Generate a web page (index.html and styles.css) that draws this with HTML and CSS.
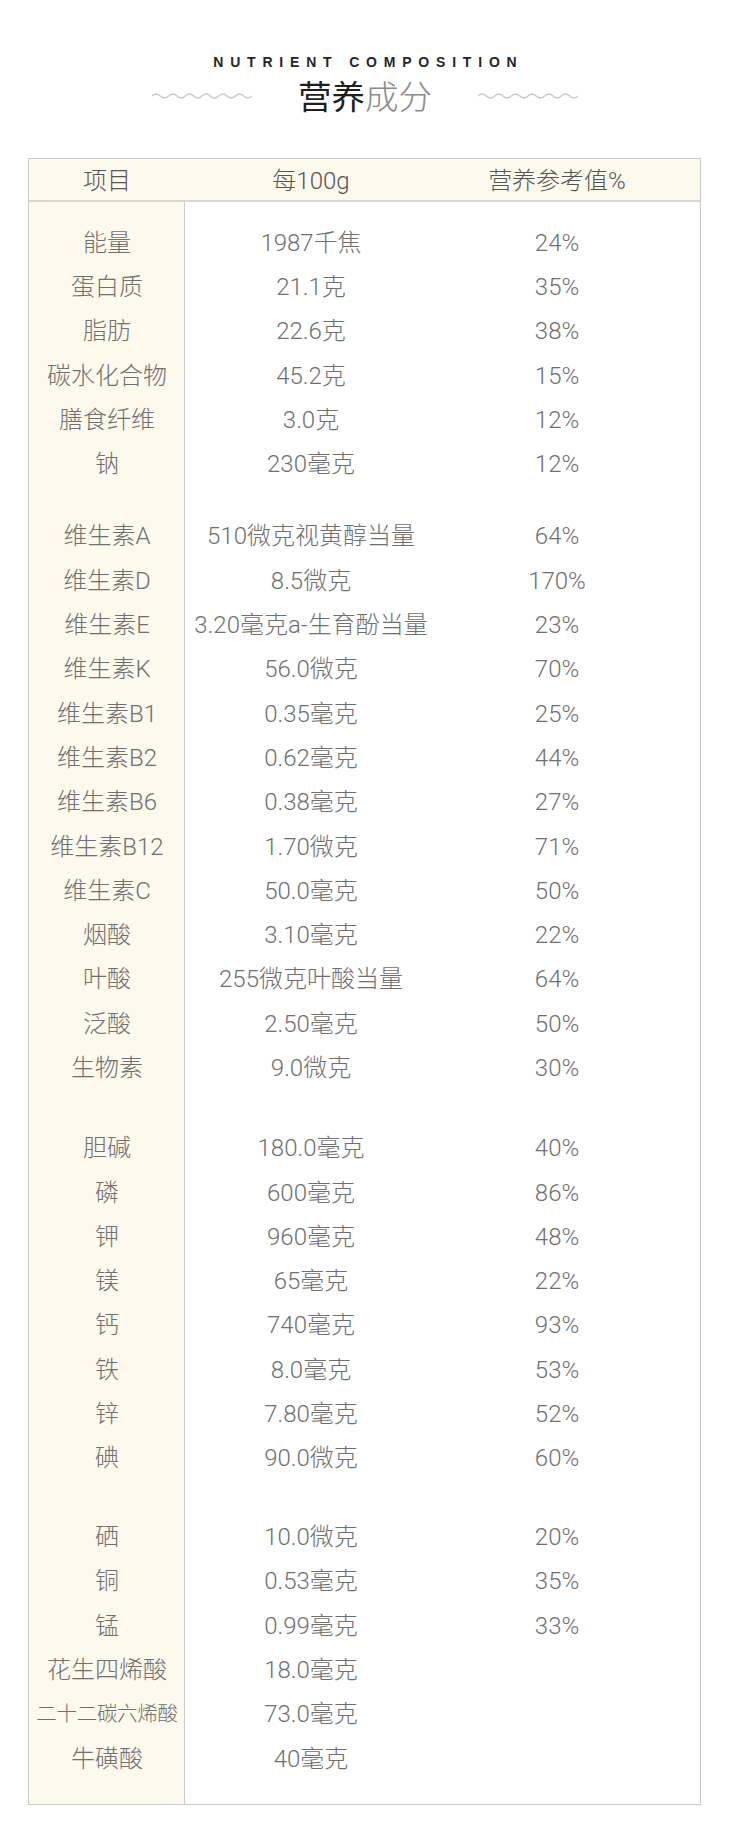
FILE: index.html
```html
<!DOCTYPE html>
<html lang="zh-CN">
<head>
<meta charset="utf-8">
<title>营养成分</title>
<link rel="stylesheet" href="styles.css">
</head>
<body>
<div class="page">
  <header class="heading">
    <div class="en">NUTRIENT COMPOSITION</div>
    <div class="cn-row">
      <svg class="wave" width="100" height="10" viewBox="0 0 100 10"><path d="M0 6 Q4.17 2 8.33 6 T16.67 6 T25 6 T33.33 6 T41.67 6 T50 6 T58.33 6 T66.67 6 T75 6 T83.33 6 T91.67 6 T100 6"/></svg>
      <h1 class="cn"><span class="cn-dark">营养</span><span class="cn-light">成分</span></h1>
      <svg class="wave" width="100" height="10" viewBox="0 0 100 10"><path d="M0 6 Q4.17 2 8.33 6 T16.67 6 T25 6 T33.33 6 T41.67 6 T50 6 T58.33 6 T66.67 6 T75 6 T83.33 6 T91.67 6 T100 6"/></svg>
    </div>
  </header>

  <div class="table">
    <div class="row thead">
      <div class="cell">项目</div>
      <div class="cell">每100g</div>
      <div class="cell">营养参考值%</div>
    </div>
    <div class="tbody">
      <div class="group g1">
        <div class="row"><div class="cell">能量</div><div class="cell">1987千焦</div><div class="cell">24%</div></div>
        <div class="row"><div class="cell">蛋白质</div><div class="cell">21.1克</div><div class="cell">35%</div></div>
        <div class="row"><div class="cell">脂肪</div><div class="cell">22.6克</div><div class="cell">38%</div></div>
        <div class="row"><div class="cell">碳水化合物</div><div class="cell">45.2克</div><div class="cell">15%</div></div>
        <div class="row"><div class="cell">膳食纤维</div><div class="cell">3.0克</div><div class="cell">12%</div></div>
        <div class="row"><div class="cell">钠</div><div class="cell">230毫克</div><div class="cell">12%</div></div>
      </div>
      <div class="group g2">
        <div class="row"><div class="cell">维生素A</div><div class="cell">510微克视黄醇当量</div><div class="cell">64%</div></div>
        <div class="row"><div class="cell">维生素D</div><div class="cell">8.5微克</div><div class="cell">170%</div></div>
        <div class="row"><div class="cell">维生素E</div><div class="cell">3.20毫克a-生育酚当量</div><div class="cell">23%</div></div>
        <div class="row"><div class="cell">维生素K</div><div class="cell">56.0微克</div><div class="cell">70%</div></div>
        <div class="row"><div class="cell">维生素B1</div><div class="cell">0.35毫克</div><div class="cell">25%</div></div>
        <div class="row"><div class="cell">维生素B2</div><div class="cell">0.62毫克</div><div class="cell">44%</div></div>
        <div class="row"><div class="cell">维生素B6</div><div class="cell">0.38毫克</div><div class="cell">27%</div></div>
        <div class="row"><div class="cell">维生素B12</div><div class="cell">1.70微克</div><div class="cell">71%</div></div>
        <div class="row"><div class="cell">维生素C</div><div class="cell">50.0毫克</div><div class="cell">50%</div></div>
        <div class="row"><div class="cell">烟酸</div><div class="cell">3.10毫克</div><div class="cell">22%</div></div>
        <div class="row"><div class="cell">叶酸</div><div class="cell">255微克叶酸当量</div><div class="cell">64%</div></div>
        <div class="row"><div class="cell">泛酸</div><div class="cell">2.50毫克</div><div class="cell">50%</div></div>
        <div class="row"><div class="cell">生物素</div><div class="cell">9.0微克</div><div class="cell">30%</div></div>
      </div>
      <div class="group g3">
        <div class="row"><div class="cell">胆碱</div><div class="cell">180.0毫克</div><div class="cell">40%</div></div>
        <div class="row"><div class="cell">磷</div><div class="cell">600毫克</div><div class="cell">86%</div></div>
        <div class="row"><div class="cell">钾</div><div class="cell">960毫克</div><div class="cell">48%</div></div>
        <div class="row"><div class="cell">镁</div><div class="cell">65毫克</div><div class="cell">22%</div></div>
        <div class="row"><div class="cell">钙</div><div class="cell">740毫克</div><div class="cell">93%</div></div>
        <div class="row"><div class="cell">铁</div><div class="cell">8.0毫克</div><div class="cell">53%</div></div>
        <div class="row"><div class="cell">锌</div><div class="cell">7.80毫克</div><div class="cell">52%</div></div>
        <div class="row"><div class="cell">碘</div><div class="cell">90.0微克</div><div class="cell">60%</div></div>
      </div>
      <div class="group g4">
        <div class="row"><div class="cell">硒</div><div class="cell">10.0微克</div><div class="cell">20%</div></div>
        <div class="row"><div class="cell">铜</div><div class="cell">0.53毫克</div><div class="cell">35%</div></div>
        <div class="row"><div class="cell">锰</div><div class="cell">0.99毫克</div><div class="cell">33%</div></div>
        <div class="row"><div class="cell">花生四烯酸</div><div class="cell">18.0毫克</div><div class="cell"></div></div>
        <div class="row"><div class="cell small">二十二碳六烯酸</div><div class="cell">73.0毫克</div><div class="cell"></div></div>
        <div class="row"><div class="cell">牛磺酸</div><div class="cell">40毫克</div><div class="cell"></div></div>
      </div>
    </div>
  </div>
</div>
</body>
</html>
```

FILE: styles.css
```css
* { box-sizing: border-box; }

html, body {
  margin: 0;
  padding: 0;
  background: #fff;
}

.page {
  width: 730px;
  height: 1843px;
  font-family: "Roboto", "Noto Sans CJK SC", sans-serif;
  font-weight: 300;
  color: #707070;
}

.heading {
  padding-top: 54px;
  display: flex;
  flex-direction: column;
  align-items: center;
}

.en {
  font-family: "Liberation Sans", Arial, sans-serif;
  font-weight: 700;
  font-size: 14px;
  line-height: 16px;
  letter-spacing: 6.8px;
  margin-right: -6.8px;
  color: #262626;
}

.cn-row {
  margin-top: 4px;
  display: flex;
  align-items: center;
  gap: 46px;
  height: 42px;
}

.wave {
  display: block;
  fill: none;
  stroke: #c9c9c9;
  stroke-width: 1.2;
}

.cn {
  margin: 0;
  font-family: "Noto Sans CJK SC", sans-serif;
  font-size: 33.5px;
  line-height: 42px;
  font-weight: 400;
}

.cn-dark { color: #1e1e1e; }
.cn-light { color: #8a8a8a; font-weight: 300; }

.table {
  margin: 42px 0 0 28px;
  width: 673px;
  border: 1px solid #c9c9c9;
}

.row {
  display: grid;
  grid-template-columns: 156px 252px 240px;
  height: 44.3px;
  align-items: center;
}

.cell {
  text-align: center;
  font-size: 24px;
  line-height: 28px;
  white-space: nowrap;
}

.cell.small {
  font-size: 20.5px;
  letter-spacing: -0.3px;
}

.thead {
  height: 43px;
  background: #fdf9ec;
  border-bottom: 2px solid #d6d6d6;
  color: #555;
  padding-top: 3px;
}

.tbody {
  background: linear-gradient(to right, #fdf9ec 0, #fdf9ec 155px, #cccccc 155px, #cccccc 156px, #fff 156px);
  padding-bottom: 23px;
}

.g1 { padding-top: 18.5px; }
.g2 { padding-top: 28px; }
.g3 { padding-top: 36px; }
.g4 { padding-top: 34.5px; }
```
